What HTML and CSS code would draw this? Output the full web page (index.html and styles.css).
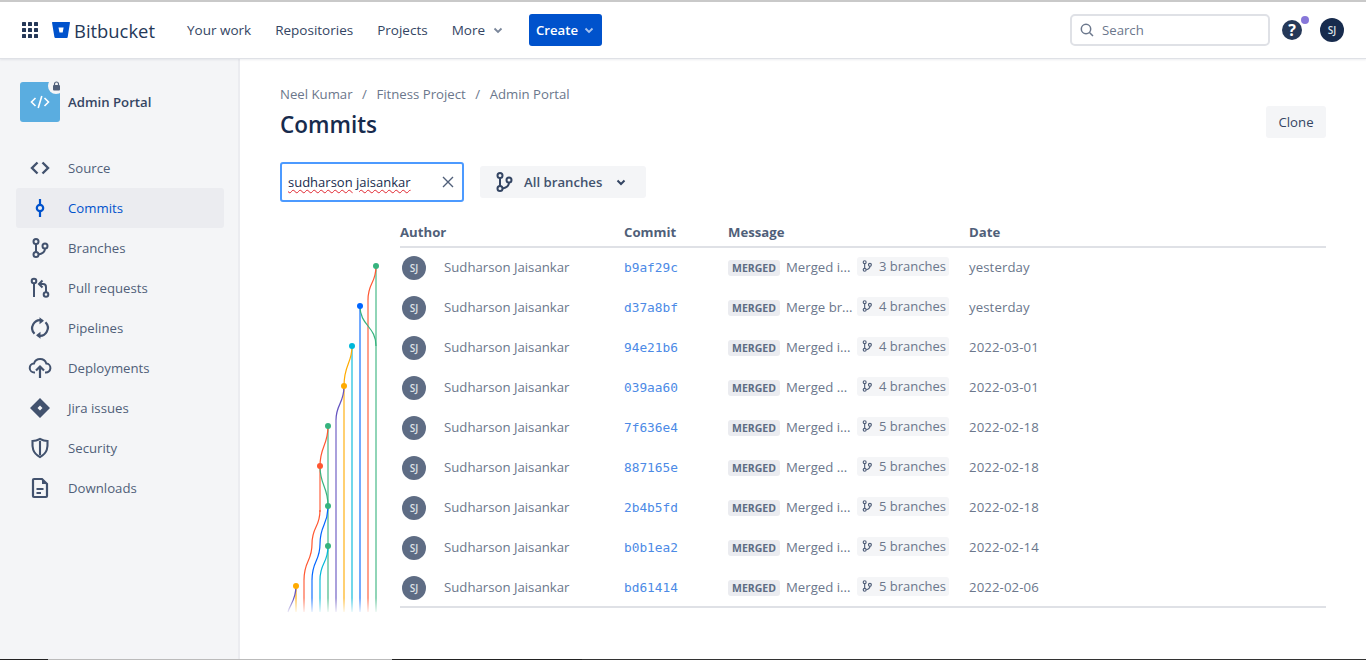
FILE: index.html
```html
<!DOCTYPE html>
<html lang="en">
<head>
<meta charset="utf-8">
<title>Commits</title>
<link rel="stylesheet" href="styles.css">
</head>
<body>
<svg class="defs" width="0" height="0" aria-hidden="true">
  <defs>
    <symbol id="i-branch" viewBox="0 0 24 24"><g fill="none" stroke="currentColor" stroke-width="2"><circle cx="8" cy="5.5" r="2.5"/><circle cx="8" cy="18.5" r="2.5"/><circle cx="17" cy="10" r="2.5"/><path d="M8 8v8M17 12.500c0 3-2 5-6.500 6"/></g></symbol>
    <linearGradient id="fade" x1="0" y1="0" x2="0" y2="1"><stop offset="0" stop-color="#fff" stop-opacity="0"/><stop offset="1" stop-color="#fff"/></linearGradient>
  </defs>
</svg>
<header class="topbar">
  <svg class="apps" width="18" height="18" viewBox="0 0 18 18"><g fill="#253858"><rect x="1" y="1" width="4" height="4" rx=".6"/><rect x="7" y="1" width="4" height="4" rx=".6"/><rect x="13" y="1" width="4" height="4" rx=".6"/><rect x="1" y="7" width="4" height="4" rx=".6"/><rect x="7" y="7" width="4" height="4" rx=".6"/><rect x="13" y="7" width="4" height="4" rx=".6"/><rect x="1" y="13" width="4" height="4" rx=".6"/><rect x="7" y="13" width="4" height="4" rx=".6"/><rect x="13" y="13" width="4" height="4" rx=".6"/></g></svg>
  <div class="brand">
    <svg width="18" height="16" viewBox="0 0 18 16"><path d="M.6 0h16.800c.4 0 .6.300.6.600L15.700 15c-.1.500-.4 1-1 1H3.500c-.6 0-1-.4-1.100-1L0 .6C0 .3.200 0 .6 0zM6.500 5.500l1 5h3.200l.9-5z" fill="#0052CC" fill-rule="evenodd"/></svg>
    <span class="brand-name">Bitbucket</span>
  </div>
  <nav class="topnav">
    <a class="topnav-item">Your work</a>
    <a class="topnav-item">Repositories</a>
    <a class="topnav-item">Projects</a>
    <a class="topnav-item">More<svg class="chev" width="12" height="12" viewBox="0 0 12 12"><path d="M2.500 4.500 6 8l3.500-3.500" fill="none" stroke="#7a869a" stroke-width="1.800"/></svg></a>
  </nav>
  <button class="create">Create<svg width="12" height="12" viewBox="0 0 12 12"><path d="M2.500 4.500 6 8l3.500-3.500" fill="none" stroke="#a9c3ee" stroke-width="1.800"/></svg></button>
  <div class="search">
    <svg width="16" height="16" viewBox="0 0 16 16"><circle cx="7" cy="7" r="4.700" fill="none" stroke="#6b778c" stroke-width="1.500"/><path d="M10.500 10.500 14 14" stroke="#6b778c" stroke-width="1.500"/></svg>
    <span>Search</span>
  </div>
  <div class="help"><span class="help-q">?</span><span class="help-dot"></span></div>
  <div class="me">SJ</div>
</header>
<div class="shell">
  <aside class="side">
    <div class="repo">
      <div class="repo-logo">
        <svg width="24" height="24" viewBox="0 0 24 24"><path d="M7.500 8 3.500 12l4 4M16.500 8l4 4-4 4M13.800 6l-3.600 12" fill="none" stroke="#fff" stroke-width="1.600"/></svg>
        <span class="repo-lock"><svg width="9" height="10" viewBox="0 0 9 10"><path d="M2.500 4V3a2 2 0 0 1 4 0v1" fill="none" stroke="#505f79" stroke-width="1.200"/><rect x="1" y="4" width="7" height="5.500" rx="1" fill="#505f79"/></svg></span>
      </div>
      <span class="repo-name">Admin Portal</span>
    </div>
    <ul class="menu">
      <li class="menu-item"><svg class="mi" viewBox="0 0 24 24"><path d="M9.500 6.500 4 12l5.500 5.500M14.500 6.500 20 12l-5.500 5.500" fill="none" stroke="currentColor" stroke-width="2.400"/></svg>Source</li>
      <li class="menu-item is-active"><svg class="mi" viewBox="0 0 24 24"><circle cx="12" cy="12" r="3.200" fill="none" stroke="currentColor" stroke-width="2.200"/><path d="M12 3v5.500M12 15.500V21" stroke="currentColor" stroke-width="2.200"/></svg>Commits</li>
      <li class="menu-item"><svg class="mi"><use href="#i-branch"/></svg>Branches</li>
      <li class="menu-item"><svg class="mi" viewBox="0 0 24 24"><g fill="none" stroke="currentColor" stroke-width="2"><circle cx="6" cy="5" r="2.300"/><path d="M6 7.500V21"/><circle cx="18" cy="18.500" r="2.300"/><path d="M18 16v-5c0-2-1-3-3-3h-3M14.500 4.500 11 8l3.500 3.500"/></g></svg>Pull requests</li>
      <li class="menu-item"><svg class="mi" viewBox="0 0 24 24"><path d="M14 4.400A8 8 0 0 0 6.500 17.800M10 19.600A8 8 0 0 0 17.500 6.200" fill="none" stroke="currentColor" stroke-width="2.200"/><path d="M11.500 1.200v7l4.500-3.500zM12.500 22.800v-7L8 19.300z" fill="currentColor"/></svg>Pipelines</li>
      <li class="menu-item"><svg class="mi" viewBox="0 0 24 24"><path d="M7 16.500H6.500a4.500 4.500 0 0 1-.5-9 6.500 6.500 0 0 1 12.300 0 4.500 4.500 0 0 1-.8 9H17" fill="none" stroke="currentColor" stroke-width="2"/><path d="M12 22V11M8 14.500 12 10.500l4 4" fill="none" stroke="currentColor" stroke-width="2.200"/></svg>Deployments</li>
      <li class="menu-item"><svg class="mi" viewBox="0 0 24 24"><path d="M12 2 22 12 12 22 2 12zM12 9.500l-2.500 2.500 2.500 2.500 2.500-2.500z" fill="currentColor" fill-rule="evenodd"/></svg>Jira issues</li>
      <li class="menu-item"><svg class="mi" viewBox="0 0 24 24"><path d="M12 3c3 1.500 5 2 7.500 2 .3 6 .3 12-7.500 16C4.200 17 4.200 11 4.500 5 7 5 9 4.500 12 3zM12 5v14" fill="none" stroke="currentColor" stroke-width="2.100"/></svg>Security</li>
      <li class="menu-item"><svg class="mi" viewBox="0 0 24 24"><path d="M6 3h8l5 5v12a1 1 0 0 1-1 1H6a1 1 0 0 1-1-1V4a1 1 0 0 1 1-1z" fill="none" stroke="currentColor" stroke-width="2.200"/><path d="M14 3v5h5z" fill="currentColor"/><path d="M8.500 13h7M8.500 17h4.500" stroke="currentColor" stroke-width="2"/></svg>Downloads</li>
    </ul>
  </aside>
  <main class="main">
    <div class="crumbs"><span>Neel Kumar</span><i>/</i><span>Fitness Project</span><i>/</i><span>Admin Portal</span></div>
    <div class="title-row">
      <h1>Commits</h1>
      <button class="clone">Clone</button>
    </div>
    <div class="filters">
      <div class="filter-input"><span class="filter-text"><span class="typo">sudharson</span> <span class="typo">jaisankar</span></span>
        <svg width="12" height="12" viewBox="0 0 12 12"><path d="M1 1l10 10M11 1 1 11" stroke="#505f79" stroke-width="1.400"/></svg>
      </div>
      <button class="branch-btn"><svg class="bb-icon"><use href="#i-branch"/></svg>All branches<svg width="12" height="12" viewBox="0 0 12 12"><path d="M2.500 4.500 6 8l3.500-3.500" fill="none" stroke="#344563" stroke-width="2"/></svg></button>
    </div>
    <div class="history">
      <svg class="graph" width="120" height="392" viewBox="280 222 120 392">
        <g fill="none" stroke-width="2" opacity=".55">
          <path stroke="#36B37E" d="M376 266V612"/>
          <path stroke="#FF5630" d="M368 300V612"/>
          <path stroke="#0065FF" d="M360 306V612"/>
          <path stroke="#00B8D9" d="M352 346V612"/>
          <path stroke="#FFAB00" d="M344 386V612"/>
          <path stroke="#6554C0" d="M336 420V612"/>
          <path stroke="#36B37E" d="M328 426V612"/>
          <path stroke="#FF5630" d="M320 466V512"/>
          <path stroke="#0065FF" d="M312 580V612"/>
          <path stroke="#FF5630" d="M304 580V612"/>
          <path stroke="#00B8D9" d="M320 580V612"/>
          <path stroke="#FFAB00" d="M296 586V612"/>
        </g>
        <g fill="none" stroke-width="1.200">
          <path stroke="#FF5630" d="M376 266C376 284 368 282 368 300"/>
          <path stroke="#36B37E" d="M360 306C360 326 376 326 376 346"/>
          <path stroke="#FFAB00" d="M352 346C352 364 344 364 344 386"/>
          <path stroke="#6554C0" d="M344 386C344 404 336 404 336 420"/>
          <path stroke="#FF5630" d="M328 426C328 446 320 446 320 466"/>
          <path stroke="#36B37E" d="M320 466C320 486 328 486 328 506"/>
          <path stroke="#FF5630" d="M320 510C320 528 312 526 312 544C312 562 304 560 304 580"/>
          <path stroke="#0065FF" d="M328 506C328 526 320 524 320 544C320 562 312 560 312 580"/>
          <path stroke="#00B8D9" d="M328 546C328 564 320 562 320 580"/>
          <path stroke="#6554C0" d="M296 586C296 600 290 604 288 612"/>
        </g>
        <rect x="280" y="598" width="120" height="16" fill="url(#fade)"/>
        <circle cx="376" cy="266" r="3" fill="#36B37E"/>
        <circle cx="360" cy="306" r="3" fill="#0065FF"/>
        <circle cx="352" cy="346" r="3" fill="#00B8D9"/>
        <circle cx="344" cy="386" r="3" fill="#FFAB00"/>
        <circle cx="328" cy="426" r="3" fill="#36B37E"/>
        <circle cx="320" cy="466" r="3" fill="#FF5630"/>
        <circle cx="328" cy="506" r="3" fill="#36B37E"/>
        <circle cx="328" cy="546" r="3" fill="#36B37E"/>
        <circle cx="296" cy="586" r="3" fill="#FFAB00"/>
      </svg>
      <div class="table">
        <div class="row head"><div>Author</div><div>Commit</div><div>Message</div><div>Date</div></div>
        <div class="row"><div class="author"><span class="av">SJ</span>Sudharson Jaisankar</div><div class="hash">b9af29c</div><div class="msg"><span class="tag">MERGED</span><span class="msg-text">Merged i...</span><span class="pill"><svg class="pill-i"><use href="#i-branch"/></svg>3 branches</span></div><div class="date">yesterday</div></div>
        <div class="row"><div class="author"><span class="av">SJ</span>Sudharson Jaisankar</div><div class="hash">d37a8bf</div><div class="msg"><span class="tag">MERGED</span><span class="msg-text">Merge br...</span><span class="pill"><svg class="pill-i"><use href="#i-branch"/></svg>4 branches</span></div><div class="date">yesterday</div></div>
        <div class="row"><div class="author"><span class="av">SJ</span>Sudharson Jaisankar</div><div class="hash">94e21b6</div><div class="msg"><span class="tag">MERGED</span><span class="msg-text">Merged i...</span><span class="pill"><svg class="pill-i"><use href="#i-branch"/></svg>4 branches</span></div><div class="date">2022-03-01</div></div>
        <div class="row"><div class="author"><span class="av">SJ</span>Sudharson Jaisankar</div><div class="hash">039aa60</div><div class="msg"><span class="tag">MERGED</span><span class="msg-text">Merged ...</span><span class="pill"><svg class="pill-i"><use href="#i-branch"/></svg>4 branches</span></div><div class="date">2022-03-01</div></div>
        <div class="row"><div class="author"><span class="av">SJ</span>Sudharson Jaisankar</div><div class="hash">7f636e4</div><div class="msg"><span class="tag">MERGED</span><span class="msg-text">Merged i...</span><span class="pill"><svg class="pill-i"><use href="#i-branch"/></svg>5 branches</span></div><div class="date">2022-02-18</div></div>
        <div class="row"><div class="author"><span class="av">SJ</span>Sudharson Jaisankar</div><div class="hash">887165e</div><div class="msg"><span class="tag">MERGED</span><span class="msg-text">Merged ...</span><span class="pill"><svg class="pill-i"><use href="#i-branch"/></svg>5 branches</span></div><div class="date">2022-02-18</div></div>
        <div class="row"><div class="author"><span class="av">SJ</span>Sudharson Jaisankar</div><div class="hash">2b4b5fd</div><div class="msg"><span class="tag">MERGED</span><span class="msg-text">Merged i...</span><span class="pill"><svg class="pill-i"><use href="#i-branch"/></svg>5 branches</span></div><div class="date">2022-02-18</div></div>
        <div class="row"><div class="author"><span class="av">SJ</span>Sudharson Jaisankar</div><div class="hash">b0b1ea2</div><div class="msg"><span class="tag">MERGED</span><span class="msg-text">Merged i...</span><span class="pill"><svg class="pill-i"><use href="#i-branch"/></svg>5 branches</span></div><div class="date">2022-02-14</div></div>
        <div class="row"><div class="author"><span class="av">SJ</span>Sudharson Jaisankar</div><div class="hash">bd61414</div><div class="msg"><span class="tag">MERGED</span><span class="msg-text">Merged i...</span><span class="pill"><svg class="pill-i"><use href="#i-branch"/></svg>5 branches</span></div><div class="date">2022-02-06</div></div>
      </div>
    </div>
  </main>
</div>
<div class="bottom-edge"></div>
</body>
</html>
```
FILE: styles.css
```css
* { box-sizing: border-box; }
html, body { margin: 0; height: 100%; overflow: hidden; }
body { font-family: "Open Sans", "Noto Sans", sans-serif; font-size: 13.200px; color: #172b4d; background: #fff; display: flex; flex-direction: column; }
button { font-family: inherit; border: 0; cursor: pointer; }
.defs { position: absolute; }

.topbar { height: 59px; flex: none; display: flex; align-items: center; padding: 0 22px 0 21px; border-top: 2px solid #c9c9c9; border-bottom: 1px solid #dfe1e6; box-shadow: 0 1px 2px rgba(9,30,66,.08); position: relative; z-index: 1; background: #fff; }
.apps { flex: none; }
.brand { display: flex; align-items: center; gap: 4px; margin-left: 13px; width: 135px; }
.brand-name { font-size: 18.400px; color: #253858; }
.topnav { display: flex; gap: 24px; font-size: 13.500px; }
.topnav-item { color: #344563; display: flex; align-items: center; gap: 7px; line-height: 18px; margin-top: -1px; }
.chev { margin-top: 1px; }
.create { margin-left: 25px; width: 73px; height: 32px; border-radius: 3px; background: #0052cc; color: #fff; font-weight: 600; font-size: 13.200px; display: flex; align-items: center; justify-content: center; gap: 5px; padding: 0; }
.search { margin-left: auto; width: 200px; height: 32px; border: 2px solid #dfe1e6; border-radius: 5px; display: flex; align-items: center; gap: 7px; padding-left: 7px; color: #6b778c; }
.help { position: relative; width: 20px; height: 20px; margin-left: 12px; }
.help-q { width: 20px; height: 20px; border-radius: 50%; background: #253858; color: #fff; display: flex; align-items: center; justify-content: center; font-weight: 700; font-size: 16px; }
.help-dot { position: absolute; width: 8px; height: 8px; border-radius: 50%; background: #8777d9; top: -4px; right: -7px; }
.me { width: 24px; height: 24px; border-radius: 50%; background: #172b4d; color: #dfe1e6; font-size: 10px; font-weight: 600; display: flex; align-items: center; justify-content: center; margin-left: 18px; }

.shell { flex: 1; display: flex; min-height: 0; }
.side { width: 240px; flex: none; background: #f4f5f7; border-right: 2px solid #ebecf0; padding: 23px 14px 0 16px; }
.repo { display: flex; align-items: center; gap: 8px; padding-left: 4px; height: 40px; }
.repo-logo { position: relative; width: 40px; height: 40px; background: #5aade0; border-radius: 3px; display: flex; align-items: center; justify-content: center; }
.repo-lock { position: absolute; top: -4px; right: -4px; width: 16px; height: 16px; border-radius: 50%; background: #f4f5f7; display: flex; align-items: center; justify-content: center; }
.repo-name { font-weight: 600; color: #344563; }
.menu { list-style: none; margin: 26px 0 0; padding: 0; }
.menu-item { height: 40px; display: flex; align-items: center; color: #505f79; border-radius: 3px; padding-left: 12px; gap: 16px; }
.mi { width: 24px; height: 24px; color: #42526e; flex: none; }
.is-active { background: #ebecf0; color: #0052cc; }
.is-active .mi { color: #0052cc; }

.main { flex: 1; min-width: 0; padding: 25px 40px 0 40px; }
.crumbs { display: flex; gap: 9.500px; color: #6b778c; line-height: 20px; }
.crumbs i { font-style: normal; }
.title-row { display: flex; align-items: flex-start; justify-content: space-between; height: 58px; }
h1 { margin: 2px 0 0; font-size: 22.500px; font-weight: 600; line-height: 38px; color: #172b4d; }
.clone { width: 60px; height: 32px; background: #f4f5f7; color: #344563; border-radius: 3px; font-size: 13.200px; font-weight: 500; padding: 0; margin-top: 2px; }
.filters { display: flex; align-items: center; gap: 16px; height: 40px; }
.filter-input { width: 184px; height: 40px; border: 2px solid #4c9aff; border-radius: 3px; display: flex; align-items: center; justify-content: space-between; padding: 0 8px 0 6px; font-size: 13px; }
.typo { text-decoration: underline wavy #e0262f 1px; text-underline-offset: 2px; }
.branch-btn { height: 32px; width: 166px; background: #f4f5f7; border-radius: 3px; display: flex; align-items: center; padding: 0 0 0 12px; color: #42526e; font-size: 13.200px; font-weight: 600; }
.bb-icon { width: 24px; height: 24px; margin-right: 8px; color: #344563; }
.branch-btn svg:last-child { margin-left: 13px; }

.history { display: flex; margin-top: 20px; }
.graph { flex: none; }
.table { flex: 1; min-width: 0; border-bottom: 2px solid #dfe1e6; height: 386px; }
.row { display: grid; grid-template-columns: 224px 104px 241px 1fr; align-items: center; height: 40px; color: #6b778c; }
.head { height: 26px; align-items: start; font-weight: 700; color: #505f79; line-height: 20px; border-bottom: 2px solid #dfe1e6; }
.author { display: flex; align-items: center; padding: 0 0 2px 2px; gap: 18px; }
.av { width: 24px; height: 24px; margin-top: 2px; border-radius: 50%; background: #5e6c84; color: #dfe1e6; font-size: 10px; font-weight: 600; display: flex; align-items: center; justify-content: center; }
.hash { font-family: "DejaVu Sans Mono", monospace; font-size: 12.800px; color: #4c8ae6; margin-top: -2px; }
.msg { display: flex; align-items: center; }
.tag { width: 52px; height: 16px; background: #ebecf0; border-radius: 3px; color: #5e6c84; font-size: 10.500px; font-weight: 700; display: flex; align-items: center; justify-content: center; flex: none; }
.msg-text { width: 67px; margin: -2px 0 0 6px; white-space: nowrap; flex: none; }
.pill { margin: -4px 0 0 4px; width: 92px; height: 19px; background: #f4f5f7; border-radius: 3px; display: flex; align-items: center; flex: none; gap: 5px; padding-left: 3px; white-space: nowrap; font-size: 13px; }
.pill-i { width: 14px; height: 14px; color: #505f79; flex: none; }
.date { color: #6b778c; margin-top: -2px; letter-spacing: .1px; }
.bottom-edge { height: 1px; flex: none; background: linear-gradient(90deg, #222 48px, #bbb 48px, #bbb 392px, #222 392px, #222 582px, #333 582px); }
```
